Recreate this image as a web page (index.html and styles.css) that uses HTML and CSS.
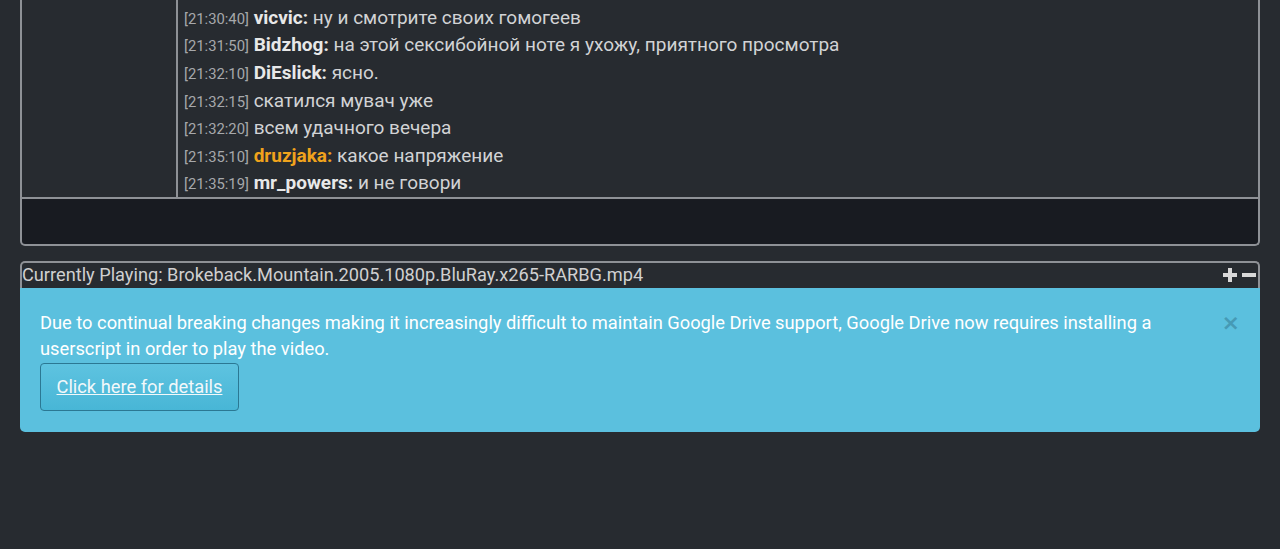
FILE: index.html
```html
<!DOCTYPE html>
<html lang="ru">
<head>
    <meta charset="UTF-8">
    <meta name="viewport" content="width=device-width, initial-scale=1.0">
    <title>CyTube</title>
    <link rel="stylesheet" href="styles.css">
</head>
<body>
    <div class="page">
        <div id="chatwrap">
            <div class="chat-main">
                <div id="userlist"></div>
                <div id="messagebuffer">
                    <div class="line"><span class="time">[21:30:12]</span> <span class="name mod">druzjaka:</span> ну вот, опять спорить будут, у них тут вечно одно и то же, ну да ладно</div>
                    <div class="line"><span class="time">[21:30:40]</span> <span class="name">vicvic:</span> ну и смотрите своих гомогеев</div>
                    <div class="line"><span class="time">[21:31:50]</span> <span class="name">Bidzhog:</span> на этой сексибойной ноте я ухожу, приятного просмотра</div>
                    <div class="line"><span class="time">[21:32:10]</span> <span class="name">DiEslick:</span> ясно.</div>
                    <div class="line"><span class="time">[21:32:15]</span> скатился мувач уже</div>
                    <div class="line"><span class="time">[21:32:20]</span> всем удачного вечера</div>
                    <div class="line"><span class="time">[21:35:10]</span> <span class="name mod">druzjaka:</span> какое напряжение</div>
                    <div class="line"><span class="time">[21:35:19]</span> <span class="name">mr_powers:</span> и не говори</div>
                </div>
            </div>
            <input id="chatline" type="text">
        </div>

        <div id="videowrap">
            <div id="videowrap-header">
                <span id="currenttitle">Currently Playing: Brokeback.Mountain.2005.1080p.BluRay.x265-RARBG.mp4</span>
                <span class="resize">
                    <svg width="17" height="16" viewBox="0 0 17 16"><path d="M6 1h4v5h5v4h-5v5H6v-5H1V6h5z" fill="#d8d8d8"/></svg>
                    <svg width="16" height="16" viewBox="0 0 16 16"><path d="M1 6h14v4H1z" fill="#d8d8d8"/></svg>
                </span>
            </div>
            <div class="alert">
                <button class="close" type="button">&times;</button>
                <p>Due to continual breaking changes making it increasingly difficult to maintain Google Drive support, Google Drive now requires installing a userscript in order to play the video.</p>
                <a class="btn-info" href="#">Click here for details</a>
            </div>
        </div>
    </div>
</body>
</html>
```

FILE: styles.css
```css
body {
    margin: 0;
    background: #272b30;
    font-family: Roboto, "Noto Sans", sans-serif;
    color: #c8c8c8;
}

.page {
    padding: 0 20px;
}

#chatwrap {
    display: flex;
    flex-direction: column;
}

.chat-main {
    display: flex;
    height: 199px;
    border-left: 2px solid #8e9196;
    border-right: 2px solid #8e9196;
    border-bottom: 2px solid #8e9196;
    box-sizing: border-box;
}

#userlist {
    width: 154px;
    flex: none;
    border-right: 2px solid #8e9196;
    background: #272b30;
}

#messagebuffer {
    flex: 1;
    overflow: hidden;
    display: flex;
    flex-direction: column;
    justify-content: flex-end;
    padding: 0 0 0 6px;
    background: #272b30;
}

.line {
    flex: none;
    height: 27.6px;
    line-height: 27.6px;
    font-size: 19px;
    white-space: nowrap;
    color: #d2d3d5;
}

.time {
    font-size: 14.8px;
    color: #a6a8ab;
}

.name {
    font-weight: bold;
    color: #e8e8e8;
}

.name.mod {
    color: #f0a31c;
}

#chatline {
    height: 47px;
    box-sizing: border-box;
    margin: 0;
    padding: 0 10px;
    background: #181b21;
    border: 2px solid #8e9196;
    border-top: none;
    border-radius: 0 0 5px 5px;
    color: #ddd;
    font-size: 16px;
}

#videowrap {
    margin-top: 15px;
}

#videowrap-header {
    display: flex;
    justify-content: space-between;
    align-items: center;
    height: 27px;
    box-sizing: border-box;
    padding: 0 1px 2px 0;
    border: 2px solid #8e9196;
    border-bottom: none;
    border-radius: 5px 5px 0 0;
    font-size: 18.2px;
    color: #d0d0d0;
}

.resize {
    display: flex;
    gap: 2px;
}

.alert {
    position: relative;
    background: #5bc0de;
    border-radius: 0 0 5px 5px;
    padding: 22px 20px 21px 20px;
    color: #fff;
    font-size: 18.3px;
}

.alert p {
    margin: 0 48px 0 0;
    line-height: 26px;
}

.close {
    position: absolute;
    top: 22px;
    right: 20px;
    border: none;
    background: none;
    padding: 0;
    font-family: "DejaVu Sans", sans-serif;
    font-size: 22px;
    font-weight: bold;
    line-height: 26px;
    color: #3e8aa4;
    opacity: 0.7;
}

.btn-info {
    display: inline-block;
    margin-top: 1px;
    width: 199px;
    height: 48px;
    box-sizing: border-box;
    line-height: 46px;
    text-align: center;
    background: linear-gradient(#5ec3e0, #48b6d6);
    border: 1px solid #2b7893;
    border-radius: 4px;
    color: #f2f8fa;
    text-decoration: underline;
    font-size: 18.3px;
}
```
